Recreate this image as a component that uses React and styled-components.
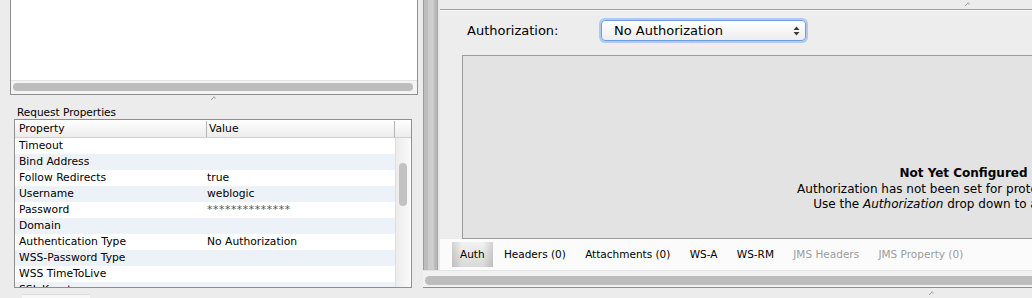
import React from "react"
import styled, { createGlobalStyle } from "styled-components"

const properties = [
  { name: "Timeout", value: "" },
  { name: "Bind Address", value: "" },
  { name: "Follow Redirects", value: "true" },
  { name: "Username", value: "weblogic" },
  { name: "Password", value: "**************", masked: true },
  { name: "Domain", value: "" },
  { name: "Authentication Type", value: "No Authorization" },
  { name: "WSS-Password Type", value: "" },
  { name: "WSS TimeToLive", value: "" },
  { name: "SSL Keystore", value: "" },
]

const tabs = [
  { label: "Auth", active: true },
  { label: "Headers (0)" },
  { label: "Attachments (0)" },
  { label: "WS-A" },
  { label: "WS-RM" },
  { label: "JMS Headers", disabled: true },
  { label: "JMS Property (0)", disabled: true },
]

function Grip() {
  return (
    <svg width="6" height="5" viewBox="0 0 6 5">
      <path d="M1 4 L4 1" stroke="#9a9a9a" strokeWidth="1" />
      <path d="M3 1 H5 V3" stroke="#b5b5b5" strokeWidth="1" fill="none" />
    </svg>
  )
}

function SelectArrows() {
  return (
    <svg width="7" height="10" viewBox="0 0 7 10">
      <path d="M0.5 4 L3.5 0.5 L6.5 4Z" fill="#3a3a3a" />
      <path d="M0.5 6 L3.5 9.5 L6.5 6Z" fill="#3a3a3a" />
    </svg>
  )
}

function App() {
  return (
    <>
      <GlobalStyle />
      <Window>
        <LeftPane>
          <TopBox>
            <HTrack>
              <HThumb />
            </HTrack>
          </TopBox>
          <GripRow>
            <Grip />
          </GripRow>
          <SectionLabel>Request Properties</SectionLabel>
          <TableBox>
            <HeaderRow>
              <HeaderCell>Property</HeaderCell>
              <HeaderCell>Value</HeaderCell>
              <HeaderCell $last />
            </HeaderRow>
            <TableBody>
              <Rows>
                {properties.map((p, i) => (
                  <Row key={p.name} $alt={i % 2 === 1}>
                    <NameCell>{p.name}</NameCell>
                    <ValueCell $masked={p.masked}>{p.value}</ValueCell>
                  </Row>
                ))}
              </Rows>
              <VTrack>
                <VThumb />
              </VTrack>
            </TableBody>
          </TableBox>
          <BottomStub />
        </LeftPane>

        <RightPane>
          <ScrollPane>
            <Viewport>
              <Strip />
              <Panel>
                <PanelTop>
                  <Grip />
                </PanelTop>
                <PanelBody>
                  <AuthRow>
                    <FieldLabel>Authorization:</FieldLabel>
                    <Select>
                      <span>No Authorization</span>
                      <SelectArrows />
                    </Select>
                  </AuthRow>
                  <ContentBox>
                    <EmptyTitle>Not Yet Configured</EmptyTitle>
                    <EmptyLine>Authorization has not been set for protected resources.</EmptyLine>
                    <EmptyLine>
                      Use the <em>Authorization</em> drop down to add one here.
                    </EmptyLine>
                  </ContentBox>
                </PanelBody>
                <TabBar>
                  {tabs.map((t) => (
                    <Tab key={t.label} $active={t.active} $disabled={t.disabled}>
                      {t.label}
                    </Tab>
                  ))}
                </TabBar>
              </Panel>
            </Viewport>
            <HScroll>
              <HScrollThumb />
            </HScroll>
          </ScrollPane>
          <BottomArea>
            <Grip />
          </BottomArea>
        </RightPane>
      </Window>
    </>
  )
}

export default App

const GlobalStyle = createGlobalStyle`
  *, *::before, *::after {
    box-sizing: border-box;
  }
  html, body {
    margin: 0;
    padding: 0;
    background: #ececec;
  }
  body {
    font-family: "DejaVu Sans", "Liberation Sans", sans-serif;
    font-size: 10.5px;
    color: #000;
  }
`

const Window = styled.div`
  display: flex;
  width: 1032px;
  height: 298px;
  overflow: hidden;
  background: #ececec;
`

const LeftPane = styled.div`
  flex: 0 0 423px;
  display: flex;
  flex-direction: column;
`

const TopBox = styled.div`
  margin-left: 10px;
  width: 408px;
  height: 95px;
  background: #fff;
  border: 1px solid #8f8f8f;
  border-top: none;
  display: flex;
  flex-direction: column;
  justify-content: flex-end;
`

const HTrack = styled.div`
  height: 14px;
  background: #f4f4f4;
  border-top: 1px solid #e4e4e4;
  padding: 2px 4px 3px 2px;
`

const HThumb = styled.div`
  height: 8px;
  border-radius: 4px;
  background: #bdbdbd;
`

const GripRow = styled.div`
  height: 10px;
  display: flex;
  justify-content: center;
  padding: 1px 0 0 2px;
`

const SectionLabel = styled.div`
  height: 14px;
  line-height: 14px;
  padding-left: 17px;
`

const TableBox = styled.div`
  margin-left: 14px;
  width: 398px;
  height: 170px;
  border: 1px solid #8f8f8f;
  background: #fff;
  display: flex;
  flex-direction: column;
  overflow: hidden;
  font-size: 10.75px;
`

const HeaderRow = styled.div`
  flex: 0 0 18px;
  display: grid;
  grid-template-columns: 192px 188px 1fr;
  background: linear-gradient(#ffffff, #ececec);
  border-bottom: 1px solid #d0d0d0;
`

const HeaderCell = styled.div`
  line-height: 16px;
  padding-left: ${(p) => (p.$last ? 0 : "4px")};
  border-right: ${(p) => (p.$last ? "none" : "1px solid #b3b3b3")};
  margin: 1px 0 0;
  &:nth-child(2) {
    padding-left: 2px;
  }
`

const TableBody = styled.div`
  flex: 1;
  display: flex;
  overflow: hidden;
`

const Rows = styled.div`
  width: 380px;
  display: flex;
  flex-direction: column;
`

const Row = styled.div`
  flex: 0 0 16px;
  display: grid;
  grid-template-columns: 192px 1fr;
  line-height: 16px;
  background: ${(p) => (p.$alt ? "#edf2f8" : "#fff")};
  white-space: nowrap;
`

const NameCell = styled.div`
  padding-left: 4px;
`

const ValueCell = styled.div`
  color: ${(p) => (p.$masked ? "#555" : "#000")};
  letter-spacing: ${(p) => (p.$masked ? "0.6px" : "0")};
`

const VTrack = styled.div`
  width: 15px;
  background: linear-gradient(to right, #ececec, #f9f9f9);
  border-left: 1px solid #dedede;
  padding: 25px 3px 0 3px;
`

const VThumb = styled.div`
  width: 8px;
  height: 43px;
  border-radius: 4px;
  background: #c2c2c2;
`

const BottomStub = styled.div`
  margin: 6px 0 0 22px;
  width: 68px;
  height: 4px;
  background: #f7f7f7;
  border-top: 1px solid #dcdcdc;
`

const RightPane = styled.div`
  flex: 1;
  min-width: 0;
  display: flex;
  flex-direction: column;
  overflow: hidden;
`

const ScrollPane = styled.div`
  flex: 0 0 288px;
  display: flex;
  flex-direction: column;
  border-bottom: 1px solid #8f8f8f;
`

const Viewport = styled.div`
  flex: 0 0 270px;
  display: flex;
  overflow: hidden;
`

const Strip = styled.div`
  flex: 0 0 17px;
  background: linear-gradient(
    to right,
    #9c9c9c 0 1px,
    #bdbdbd 1px 5px,
    #cdcdcd 5px 11px,
    #bababa 11px 14px,
    #a3a3a3 14px 15px,
    #e9e9e9 15px 17px
  );
`

const Panel = styled.div`
  flex: 0 0 1054px;
  display: flex;
  flex-direction: column;
`

const PanelTop = styled.div`
  height: 10px;
  background: #ececec;
  border-bottom: 1px solid #9c9c9c;
  display: flex;
  justify-content: center;
  padding-top: 2px;
`

const PanelBody = styled.div`
  background: #ededed;
  border-top: 1px solid #fafafa;
  padding-left: 22px;
  display: flex;
  flex-direction: column;
`

const AuthRow = styled.div`
  height: 44px;
  display: flex;
  align-items: flex-start;
  padding-top: 9px;
  font-size: 13px;
`

const FieldLabel = styled.div`
  width: 134px;
  margin-left: 5px;
  line-height: 21px;
`

const Select = styled.div`
  width: 205px;
  height: 21px;
  display: flex;
  align-items: center;
  justify-content: space-between;
  padding: 0 5px 0 12px;
  border: 1px solid #6d9fe0;
  border-radius: 4px;
  background: linear-gradient(#ffffff, #ededed);
  box-shadow: 0 0 0 2px rgba(125, 172, 238, 0.55);
`

const ContentBox = styled.div`
  width: 1002px;
  height: 184px;
  background: #e3e3e3;
  border: 1px solid #9c9c9c;
  border-right: none;
  display: flex;
  flex-direction: column;
  align-items: center;
  padding-top: 110px;
  line-height: 15.5px;
  font-size: 12px;
`

const EmptyTitle = styled.div`
  font-weight: bold;
  font-size: 12px;
`

const EmptyLine = styled.div`
  white-space: nowrap;
`

const TabBar = styled.div`
  flex: 1;
  display: flex;
  align-items: flex-start;
  padding: 3px 0 0 12px;
  background: #fbfbfb;
`

const Tab = styled.div`
  height: 25px;
  line-height: 25px;
  padding: 0 8px;
  margin-right: 3.3px;
  white-space: nowrap;
  color: ${(p) => (p.$disabled ? "#9c9c9c" : "#000")};
  background: ${(p) =>
    p.$active
      ? "linear-gradient(to right, rgba(0,0,0,0.13), rgba(0,0,0,0) 25%, rgba(0,0,0,0) 75%, rgba(0,0,0,0.13)), linear-gradient(#f2f2f2, #d9d9d9)"
      : "transparent"};
`

const HScroll = styled.div`
  flex: 1;
  background: #f1f1f1;
  border-top: 1px solid #e4e4e4;
  padding: 5px 0 2px 2px;
`

const HScrollThumb = styled.div`
  height: 9px;
  width: 1200px;
  border-radius: 5px;
  background: #bdbdbd;
`

const BottomArea = styled.div`
  flex: 1;
  display: flex;
  align-items: flex-start;
  padding: 3px 0 0 505px;
`
